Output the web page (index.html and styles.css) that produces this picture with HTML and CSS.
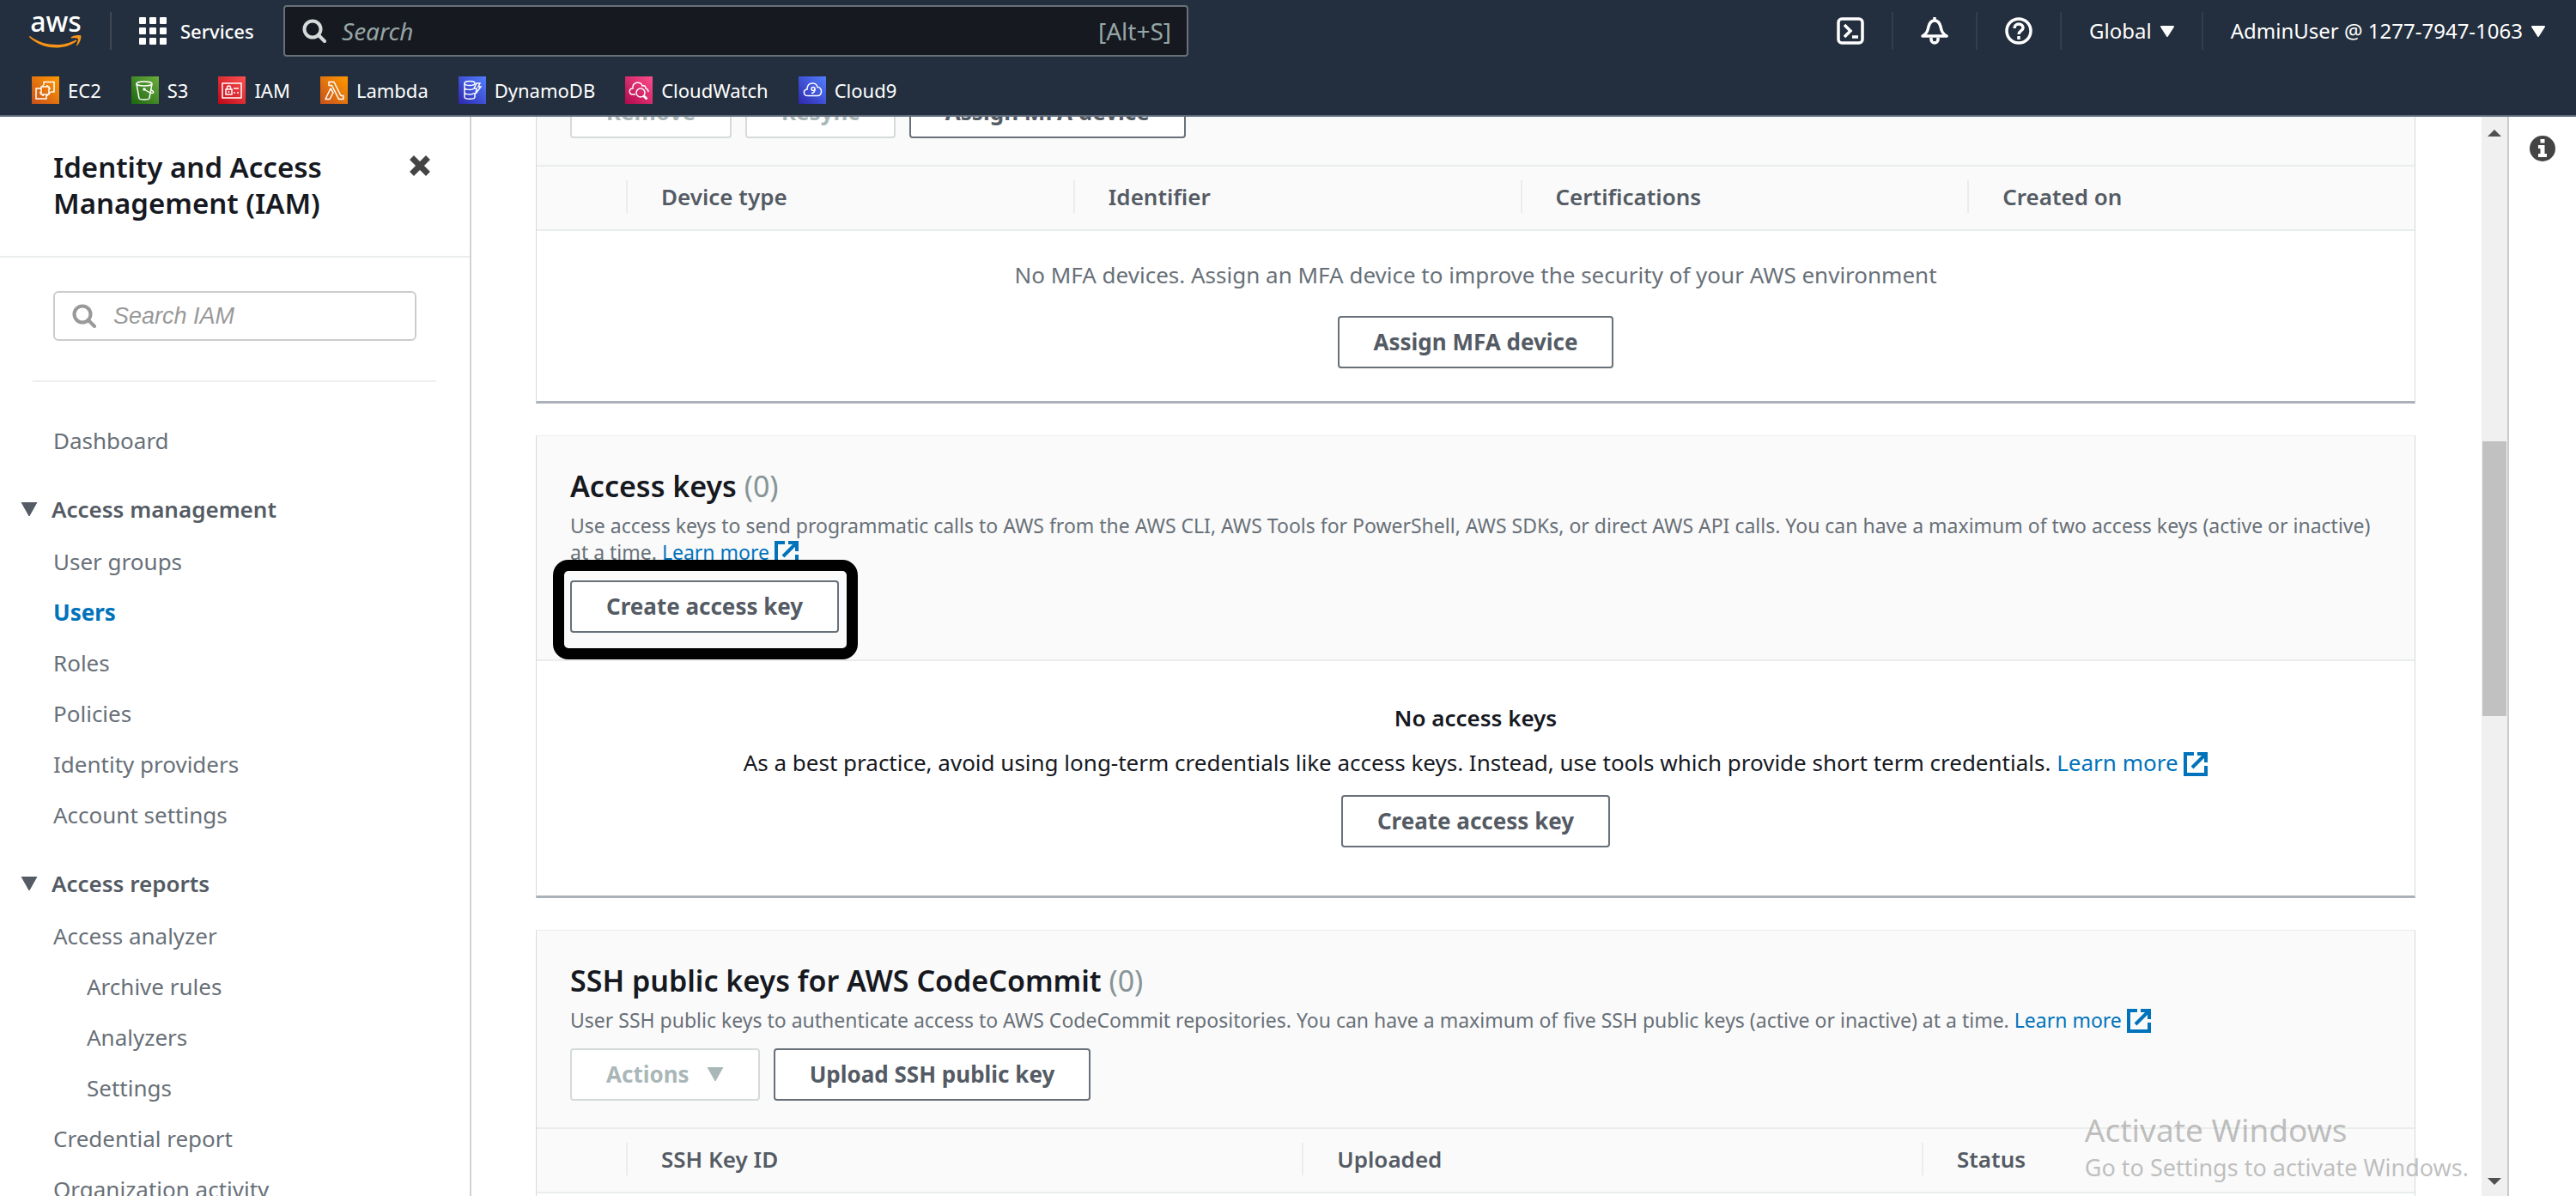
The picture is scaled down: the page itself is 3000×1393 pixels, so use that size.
FILE: index.html
```html
<!DOCTYPE html>
<html lang="en">
<head>
<meta charset="utf-8">
<meta name="viewport" content="width=device-width, initial-scale=1">
<title>IAM - Users</title>
<link rel="stylesheet" href="styles.css">
</head>
<body>
<svg class="defs" width="0" height="0" aria-hidden="true">
  <defs>
    <linearGradient id="g-orange" x1="0" y1="1" x2="1" y2="0"><stop offset="0" stop-color="#c8511b"/><stop offset="1" stop-color="#f90"/></linearGradient>
    <linearGradient id="g-green" x1="0" y1="1" x2="1" y2="0"><stop offset="0" stop-color="#1b660f"/><stop offset="1" stop-color="#6cae3e"/></linearGradient>
    <linearGradient id="g-red" x1="0" y1="1" x2="1" y2="0"><stop offset="0" stop-color="#bd0816"/><stop offset="1" stop-color="#ff5252"/></linearGradient>
    <linearGradient id="g-blue" x1="0" y1="1" x2="1" y2="0"><stop offset="0" stop-color="#2e27ad"/><stop offset="1" stop-color="#527fff"/></linearGradient>
    <linearGradient id="g-pink" x1="0" y1="1" x2="1" y2="0"><stop offset="0" stop-color="#b0084d"/><stop offset="1" stop-color="#ff4f8b"/></linearGradient>
    <symbol id="i-caret" viewBox="0 0 10 8"><path d="M0.5 0h9a.5.5 0 0 1 .4.8L5.500 7.700a.6.6 0 0 1-1 0L.1.8A.5.5 0 0 1 .5 0z" fill="currentColor"/></symbol>
    <symbol id="i-search" viewBox="0 0 28 28"><g fill="none" stroke="currentColor" stroke-width="4"><circle cx="12" cy="12" r="9.500"/><path d="M19 19l7 7" stroke-linecap="round"/></g></symbol>
    <symbol id="i-ext" viewBox="1 1 14 14"><g fill="none" stroke="currentColor" stroke-width="2"><path d="M9 2h5v5M6 10l8-8"/><path d="M14 9v5H2V2h5"/></g></symbol>
  </defs>
</svg>

<header class="top">
  <div class="top-row">
    <a class="logo" href="#" aria-label="AWS home">
      <svg width="62" height="42" viewBox="0 0 62 42">
        <text x="31" y="22" text-anchor="middle" class="logo-text">aws</text>
        <path d="M1 27c9 7 20 10 31 10 8 0 16-2 22-5.500 1-.5 2 .7 1 1.500C49 38 40 40.500 31 40.500 19 40.500 8 36 .4 28.500c-.7-.8-.1-1.900.6-1.500z" fill="#f79418"/>
        <path d="M49 28c3-2 8-2.500 11-1.700 1.300 1-.5 8.500-4 11.700-.7.500-1.300.2-1-.5.900-2 2.500-6.500 1.800-7.500-1-1-5-.8-7.300-.5-.8.100-1.100-.9-.5-1.500z" fill="#f79418"/>
      </svg>
    </a>
    <button class="services" type="button">
      <svg width="32" height="32" viewBox="0 0 32 32" fill="#fff"><rect width="8" height="8" rx="1"/><rect x="12" width="8" height="8" rx="1"/><rect x="24" width="8" height="8" rx="1"/><rect y="12" width="8" height="8" rx="1"/><rect x="12" y="12" width="8" height="8" rx="1"/><rect x="24" y="12" width="8" height="8" rx="1"/><rect y="24" width="8" height="8" rx="1"/><rect x="12" y="24" width="8" height="8" rx="1"/><rect x="24" y="24" width="8" height="8" rx="1"/></svg>
      Services
    </button>
    <label class="top-search">
      <svg width="28" height="28"><use href="#i-search"/></svg>
      <input type="search" placeholder="Search" aria-label="Search">
      <span>[Alt+S]</span>
    </label>
    <div class="top-tools">
      <button class="tool" type="button" aria-label="CloudShell">
        <svg width="32" height="32" viewBox="0 0 32 32" fill="none" stroke="#fff"><rect x="2" y="2" width="28" height="28" rx="4" stroke-width="3.500"/><path d="M9 9l7 7-7 7M18 23h7" stroke-width="3.500"/></svg>
      </button>
      <button class="tool" type="button" aria-label="Notifications">
        <svg width="32" height="32" viewBox="0 0 32 32" fill="none" stroke="#fff" stroke-width="3.500" stroke-linejoin="round"><path d="M2 22c5-3 6-6 7-11 1-4 3-7 7-7s6 3 7 7c1 5 2 8 7 11z"/><path d="M12 24v2a4 4 0 0 0 8 0v-2M16 3V0"/></svg>
      </button>
      <button class="tool" type="button" aria-label="Help">
        <svg width="32" height="32" viewBox="0 0 32 32" fill="none" stroke="#fff" stroke-width="3.500"><circle cx="16" cy="16" r="14"/><path d="M11 13c0-3 2-5 5-5s5 2 5 4.500c0 3.500-5 3.500-5 7.500"/><path d="M16 22v4"/></svg>
      </button>
      <button class="tool wide" type="button">Global <svg width="16" height="13"><use href="#i-caret"/></svg></button>
      <button class="tool wide" type="button">AdminUser @ 1277-7947-1063 <svg width="16" height="13"><use href="#i-caret"/></svg></button>
    </div>
  </div>
  <nav class="favorites" aria-label="Favorites">
    <a href="#"><svg width="32" height="32" viewBox="0 0 32 32" fill="none" stroke="#fff" stroke-width="1.500"><rect width="32" height="32" fill="url(#g-orange)" stroke="none"/><path d="M14 10V6.500h12V18h-4M9 14H5v12h12v-4"/><rect x="11" y="12" width="9" height="9"/><path d="M13 12v-2M18 12v-2M13 23v-2M18 23v-2M11 14H9M11 19H9M22 14h-2M22 19h-2"/></svg>EC2</a>
    <a href="#"><svg width="32" height="32" viewBox="0 0 32 32" fill="none" stroke="#fff" stroke-width="1.500"><rect width="32" height="32" fill="url(#g-green)" stroke="none"/><ellipse cx="15" cy="8.500" rx="9" ry="2.500"/><path d="M6 8.500l3 17c1 2 11 2 12 0l3-17M16 15.500c4 3 8 4.500 9.500 3.500 1-.8-1-2.500-3-3.500"/><circle cx="15" cy="15" r="1"/></svg>S3</a>
    <a href="#"><svg width="32" height="32" viewBox="0 0 32 32" fill="none" stroke="#fff" stroke-width="1.500"><rect width="32" height="32" fill="url(#g-red)" stroke="none"/><rect x="5" y="8" width="22" height="17"/><rect x="9" y="15" width="7" height="6"/><path d="M10.500 15v-2a2 2 0 0 1 4 0v2M12.500 17v2M18 14h6M18 19h2M22 19h2"/></svg>IAM</a>
    <a href="#"><svg width="32" height="32" viewBox="0 0 32 32" fill="none" stroke="#fff" stroke-width="1.500" stroke-linejoin="round"><rect width="32" height="32" fill="url(#g-orange)" stroke="none"/><path d="M10 6.500h6l8 16h3v4h-5.500l-8-16H10zM12 14l3 5-4 7.500H6z"/></svg>Lambda</a>
    <a href="#"><svg width="32" height="32" viewBox="0 0 32 32" fill="none" stroke="#fff" stroke-width="1.500"><rect width="32" height="32" fill="url(#g-blue)" stroke="none"/><ellipse cx="13" cy="8" rx="6" ry="2.500"/><path d="M7 8v16c0 3 12 3 12 0v-5M7 13c0 3 9 3 11 1M7 18.500c0 3 9 3 11 1M21 8h4l-2 4h3l-6 8 1-6h-3z"/></svg>DynamoDB</a>
    <a href="#"><svg width="32" height="32" viewBox="0 0 32 32" fill="none" stroke="#fff" stroke-width="1.500"><rect width="32" height="32" fill="url(#g-pink)" stroke="none"/><path d="M12 21H9c-5 0-5-7 0-7-1-8 10-9 11-3 3-1 4 1 4 3 2 .5 3 2 3 4"/><circle cx="18" cy="19" r="5"/><path d="M21.500 22.500l4 4" stroke-width="3"/></svg>CloudWatch</a>
    <a href="#"><svg width="32" height="32" viewBox="0 0 32 32" fill="none" stroke="#fff" stroke-width="1.500"><rect width="32" height="32" fill="url(#g-blue)" stroke="none"/><path d="M11 22.500c-6 0-6-7-1-7.500 0-9 11-9 12-2.500 6 0 6 10 0 10z"/><circle cx="17" cy="14.500" r="2"/><path d="M19 14.500c0 3-1 5-4 5"/></svg>Cloud9</a>
  </nav>
</header>

<div class="body">
  <aside class="side">
    <div class="side-head">
      <h1>Identity and Access Management (IAM)</h1>
      <button type="button" aria-label="Close navigation"><svg width="24" height="24" viewBox="0 0 24 24"><path d="M5 5l14 14M19 5L5 19" stroke="#444" stroke-width="7" stroke-linecap="square"/></svg></button>
    </div>
    <label class="side-search">
      <svg width="28" height="28"><use href="#i-search"/></svg>
      <input type="search" placeholder="Search IAM" aria-label="Search IAM">
    </label>
    <hr>
    <nav aria-label="IAM">
      <ul class="links"><li><a href="#">Dashboard</a></li></ul>
      <button class="group" type="button"><svg width="20" height="16"><path d="M1 0h18l-9 16z" fill="currentColor" stroke="currentColor" stroke-linejoin="round"/></svg>Access management</button>
      <ul class="links">
        <li><a href="#">User groups</a></li>
        <li><a href="#" class="current" aria-current="page">Users</a></li>
        <li><a href="#">Roles</a></li>
        <li><a href="#">Policies</a></li>
        <li><a href="#">Identity providers</a></li>
        <li><a href="#">Account settings</a></li>
      </ul>
      <button class="group" type="button"><svg width="20" height="16"><path d="M1 0h18l-9 16z" fill="currentColor" stroke="currentColor" stroke-linejoin="round"/></svg>Access reports</button>
      <ul class="links">
        <li><a href="#">Access analyzer</a></li>
        <li class="sub"><a href="#">Archive rules</a></li>
        <li class="sub"><a href="#">Analyzers</a></li>
        <li class="sub"><a href="#">Settings</a></li>
        <li><a href="#">Credential report</a></li>
        <li><a href="#">Organization activity</a></li>
      </ul>
    </nav>
  </aside>

  <main class="content">
    <section class="card scrolled" aria-label="MFA devices">
      <div class="card-head">
        <div class="actions">
          <button class="btn" type="button" disabled>Remove</button>
          <button class="btn" type="button" disabled>Resync</button>
          <button class="btn" type="button">Assign MFA device</button>
        </div>
      </div>
      <table>
        <thead><tr><td class="pick"></td><th><span>Device type</span></th><th><span>Identifier</span></th><th><span>Certifications</span></th><th><span>Created on</span></th></tr></thead>
      </table>
      <div class="empty">
        <p>No MFA devices. Assign an MFA device to improve the security of your AWS environment</p>
        <button class="btn" type="button">Assign MFA device</button>
      </div>
    </section>

    <section class="card">
      <div class="card-head">
        <h2>Access keys <span>(0)</span></h2>
        <p>Use access keys to send programmatic calls to AWS from the AWS CLI, AWS Tools for PowerShell, AWS SDKs, or direct AWS API calls. You can have a maximum of two access keys (active or inactive) at a time. <a href="#">Learn more <svg width="28" height="28"><use href="#i-ext"/></svg></a></p>
        <div class="actions">
          <div class="marked"><button class="btn" type="button">Create access key</button></div>
        </div>
      </div>
      <div class="empty keys">
        <strong>No access keys</strong>
        <p>As a best practice, avoid using long-term credentials like access keys. Instead, use tools which provide short term credentials. <a href="#">Learn more <svg width="28" height="28"><use href="#i-ext"/></svg></a></p>
        <button class="btn" type="button">Create access key</button>
      </div>
    </section>

    <section class="card">
      <div class="card-head">
        <h2>SSH public keys for AWS CodeCommit <span>(0)</span></h2>
        <p>User SSH public keys to authenticate access to AWS CodeCommit repositories. You can have a maximum of five SSH public keys (active or inactive) at a time. <a href="#">Learn more <svg width="28" height="28"><use href="#i-ext"/></svg></a></p>
        <div class="actions">
          <button class="btn" type="button" disabled>Actions <svg width="20" height="16"><path d="M1 0h18l-9 16z" fill="currentColor" stroke="currentColor" stroke-linejoin="round"/></svg></button>
          <button class="btn" type="button">Upload SSH public key</button>
        </div>
      </div>
      <table>
        <thead><tr><td class="pick"></td><th class="w-id"><span>SSH Key ID</span></th><th class="w-up"><span>Uploaded</span></th><th><span>Status</span></th></tr></thead>
        <tbody><tr><td colspan="4" class="blank"></td></tr></tbody>
      </table>
    </section>
  </main>

  <div class="scrollbar" aria-hidden="true">
    <svg width="16" height="8" viewBox="0 0 16 8"><path d="M0 8l8-8 8 8z" fill="#505050"/></svg>
    <div class="track"><div class="thumb"></div></div>
    <svg width="16" height="8" viewBox="0 0 16 8"><path d="M0 0l8 8 8-8z" fill="#505050"/></svg>
  </div>

  <aside class="info">
    <button type="button" aria-label="Open help panel"><svg width="30" height="30" viewBox="0 0 30 30"><circle cx="15" cy="15" r="15" fill="#444"/><path d="M12.500 4h5v4.500h-5zM10 11h7.500v10H20v4H10v-4h2.500v-6H10z" fill="#fff"/></svg></button>
  </aside>
</div>

<div class="watermark"><p>Activate Windows</p><p>Go to Settings to activate Windows.</p></div>
</body>
</html>
```
FILE: styles.css
```css
* { box-sizing: border-box; }

body {
  margin: 0;
  height: 100vh;
  display: flex;
  flex-direction: column;
  overflow: hidden;
  background: #fff;
  color: #16191f;
  font-family: "Noto Sans", "Open Sans", sans-serif;
  font-size: 26px;
  line-height: 36px;
}

button, input { font: inherit; color: inherit; }
button { border: 0; background: none; padding: 0; cursor: pointer; }
input { border: 0; background: none; outline: 0; padding: 0; flex: 1; min-width: 0; }
input::placeholder { color: inherit; font-style: italic; opacity: 1; }
h1, h2, p, ul { margin: 0; padding: 0; font-weight: 400; }
ul { list-style: none; }
a { text-decoration: none; }
svg { flex: none; }
.defs { position: absolute; }

/* Top navigation */
.top {
  flex: none;
  background: #232f3e;
  border-bottom: 2px solid #5f6b7a;
  color: #fff;
  font-size: 22px;
  line-height: 32px;
}
.top-row { display: flex; align-items: center; height: 72px; }
.logo {
  display: flex;
  align-items: center;
  height: 44px;
  width: 130px;
  padding-left: 34px;
  border-right: 2px solid #414750;
}
.logo svg { overflow: visible; }
.logo-text { font-size: 32px; font-weight: 500; fill: #fff; }
.services {
  display: flex;
  align-items: center;
  gap: 16px;
  width: 200px;
  padding-left: 32px;
  font-weight: 500;
}
.top-search {
  display: flex;
  align-items: center;
  gap: 18px;
  flex: 0 1 1054px;
  height: 60px;
  padding: 0 18px 0 20px;
  background: #16191f;
  border: 2px solid #687078;
  border-radius: 4px;
  color: #d5dbdb;
  font-size: 28px;
}
.top-search input::placeholder, .top-search span { color: #95a5a6; }
.top-tools { display: flex; align-items: center; margin-left: auto; }
.tool {
  display: flex;
  align-items: center;
  height: 44px;
  padding: 0 32px;
  border-left: 2px solid #343e4b;
}
.tool:first-child { border-left: 0; }
.tool:last-child { padding-right: 36px; }
.tool.wide { gap: 10px; font-size: 24px; }

.favorites { display: flex; gap: 35px; padding: 17px 37px 13px; }
.favorites a { display: flex; align-items: center; gap: 10px; color: #fff; }

/* Page body */
.body { flex: 1; min-height: 0; display: flex; overflow: hidden; }

.side {
  flex: 0 0 549px;
  border-right: 2px solid #d0d4d6;
  color: #545b64;
  overflow: hidden;
}
.side-head {
  display: flex;
  justify-content: space-between;
  align-items: flex-start;
  padding: 38px 46px 40px 62px;
  border-bottom: 2px solid #eaeded;
}
.side-head h1 {
  width: 340px;
  color: #16191f;
  font-size: 33px;
  font-weight: 600;
  line-height: 42px;
}
.side-head button { display: flex; padding-top: 7px; }
.side-search {
  display: flex;
  align-items: center;
  gap: 20px;
  height: 58px;
  margin: 39px 62px 46px;
  padding: 0 20px;
  border: 2px solid #ccc;
  border-radius: 6px;
  color: #999;
  font-family: "Liberation Sans", sans-serif;
  font-size: 27px;
}
.side hr { margin: 0 39px 50px 38px; border: 0; border-top: 2px solid #eee; }
.side nav { display: flex; flex-direction: column; }
.links { display: flex; flex-direction: column; gap: 23px; padding-left: 62px; }
.links .sub { padding-left: 39px; }
.links a { color: #687078; }
.links .current { color: #0073bb; font-weight: 700; }
.group {
  display: flex;
  align-items: center;
  gap: 16px;
  margin: 44px 0 25px;
  padding-left: 24px;
  font-weight: 600;
}

.content { flex: 1; min-width: 0; padding: 0 77px 0 75px; overflow: hidden; }
.card {
  margin-bottom: 37px;
  border: 1px solid #d5dbdb;
  border-top-color: #eaeded;
  border-bottom: 3px solid #aab1b8;
  background: #fff;
}
.card.scrolled { margin-top: -37px; }
.card-head { padding: 37px 39px 31px; background: #fafafa; border-bottom: 2px solid #eaeded; }
.scrolled .card-head { padding-top: 0; }
.card h2 { font-size: 34px; font-weight: 600; line-height: 42px; margin-bottom: 10px; }
.card h2 span { color: #879596; font-weight: 400; }
.card-head p { color: #687078; font-size: 23px; line-height: 31px; }
.card p a { color: #0073bb; }
.card p svg { vertical-align: 0; margin: -6px 0; }
.actions { display: flex; gap: 16px; }
.card-head p + .actions { margin-top: 17px; }

.btn {
  display: flex;
  align-items: center;
  gap: 20px;
  height: 61px;
  padding: 0 40px 2px;
  background: #fff;
  border: 2px solid #687078;
  border-radius: 4px;
  color: #545b64;
  font-weight: 700;
}
.btn:disabled { border-color: #d5dbdb; color: #aab7b8; cursor: default; }

.marked { position: relative; }
.marked::after {
  content: "";
  position: absolute;
  inset: -24px -22px -31px -20px;
  border: 13px solid #000;
  border-radius: 18px;
  pointer-events: none;
}

table { width: 100%; table-layout: fixed; border-collapse: collapse; }
thead { background: #fafafa; border-bottom: 2px solid #eaeded; }
th, td { padding: 16px 0 19px; text-align: left; }
th { color: #545b64; font-weight: 600; }
th span { display: block; padding-left: 39px; border-left: 2px solid #eaeded; line-height: 38px; }
.pick { width: 104px; }
.w-id { width: 36%; }
.w-up { width: 33%; }
.blank { height: 120px; }

.empty {
  display: flex;
  flex-direction: column;
  align-items: center;
  gap: 30px;
  padding: 33px 40px 38px;
  color: #687078;
}
.empty.keys { gap: 16px; padding: 48px 40px 56px; color: #16191f; }
.empty strong { font-weight: 600; }
.keys .btn { margin-top: 4px; }

.scrollbar {
  flex: 0 0 32px;
  display: flex;
  flex-direction: column;
  align-items: center;
  padding: 15px 0 13px;
  background: #f0f0f0;
  border-right: 2px solid #c8cccf;
}
.track { flex: 1; align-self: stretch; display: flex; flex-direction: column; padding: 0 1px; }
.track::before { content: ""; flex: 355; }
.track::after { content: ""; flex: 538; }
.thumb { flex: 321; background: #c1c1c1; }

.info { flex: 0 0 78px; display: flex; justify-content: center; align-items: flex-start; padding-top: 22px; }
.info button { display: flex; }

.watermark {
  position: absolute;
  right: 125px;
  bottom: 15px;
  color: rgba(130, 130, 130, 0.5);
  font-size: 27px;
  pointer-events: none;
}
.watermark p:first-child { font-size: 37px; line-height: 52px; }
```
